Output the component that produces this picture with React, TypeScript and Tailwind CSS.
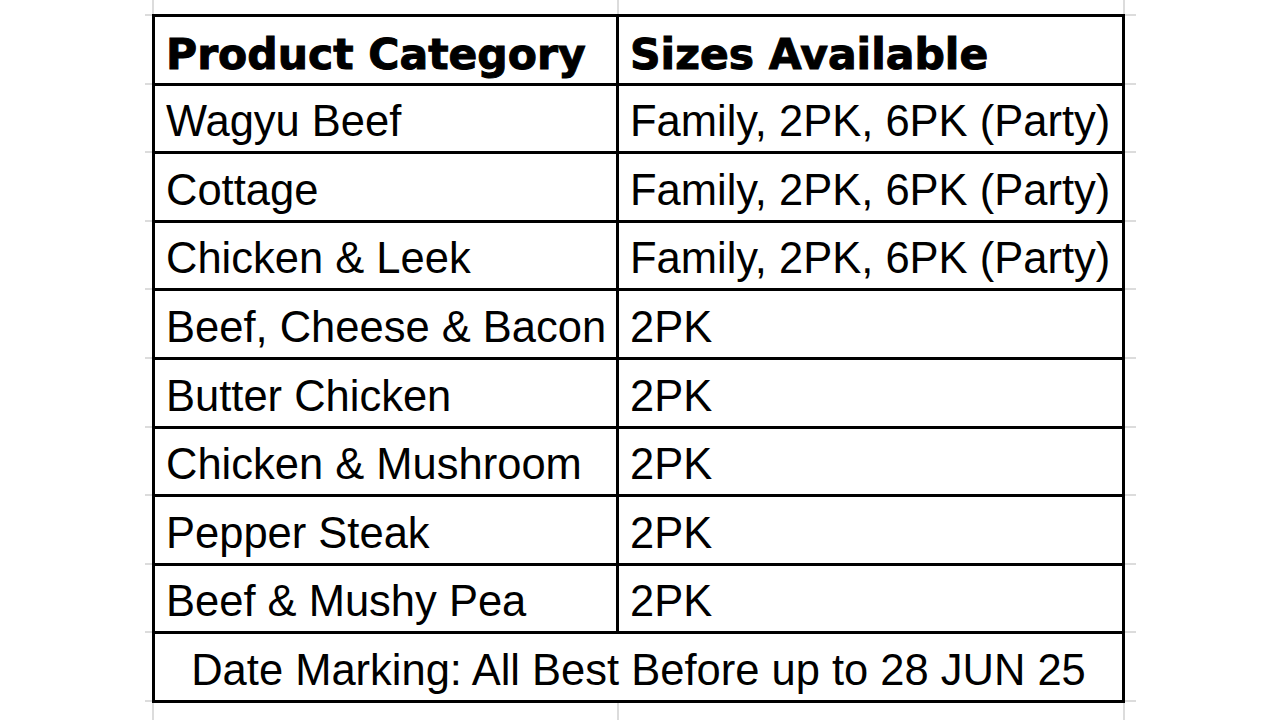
const rows = [
  { name: 'Wagyu Beef', sizes: 'Family, 2PK, 6PK (Party)' },
  { name: 'Cottage', sizes: 'Family, 2PK, 6PK (Party)' },
  { name: 'Chicken & Leek', sizes: 'Family, 2PK, 6PK (Party)' },
  { name: 'Beef, Cheese & Bacon', sizes: '2PK' },
  { name: 'Butter Chicken', sizes: '2PK' },
  { name: 'Chicken & Mushroom', sizes: '2PK' },
  { name: 'Pepper Steak', sizes: '2PK' },
  { name: 'Beef & Mushy Pea', sizes: '2PK' },
]

const slots = Array.from({ length: 10 }, (_, i) => i)

function Cell({ children, left, head }: { children: React.ReactNode; left?: boolean; head?: boolean }) {
  return (
    <div
      className={
        'flex items-center whitespace-nowrap pl-[11px] ' +
        (head ? 'pt-[10px] ' : 'pt-[7px] ') +
        (left ? 'border-r-[3px] border-black' : '')
      }
    >
      {children}
    </div>
  )
}

// faint sheet gridlines that show above and below the table
function ColumnStubs({ grow }: { grow?: boolean }) {
  return (
    <div className={'flex ' + (grow ? 'flex-1' : 'h-[14px]')}>
      <div className="w-[154px] border-r-2 border-[#dcdcdc]" />
      <div className="w-[465px] border-r-2 border-[#dcdcdc]" />
      <div className="w-[506px] border-r-2 border-[#dcdcdc]" />
    </div>
  )
}

// row gridlines poking out at the sides
function RowTicks({ side }: { side: 'left' | 'right' }) {
  const tick = side === 'left' ? 'w-[7px]' : 'w-[11px]'
  return (
    <div className={'flex flex-col ' + (side === 'left' ? 'w-[152px] items-end' : 'items-start')}>
      {slots.map((i) => (
        <div key={i} className="h-[68.6px]">
          <div className={tick + ' border-t-2 border-[#dcdcdc]'} />
        </div>
      ))}
      <div className={tick + ' border-t-2 border-[#dcdcdc]'} />
    </div>
  )
}

export default function App() {
  return (
    <div className="flex h-[720px] w-[1280px] flex-col overflow-hidden bg-white font-['Liberation_Sans',Arial,sans-serif] text-[43.5px] leading-none text-black">
      <ColumnStubs />
      <div className="flex">
        <RowTicks side="left" />
        <div className="w-[973px] border-[3px] border-b-0 border-black">
          <div className="grid h-[68.6px] grid-cols-[464px_1fr] border-b-[3px] border-black font-['DejaVu_Sans',sans-serif] text-[42.5px] font-bold [-webkit-text-stroke:1px_black]">
            <Cell left head>Product Category</Cell>
            <Cell head>Sizes Available</Cell>
          </div>
          {rows.map((r) => (
            <div key={r.name} className="grid h-[68.6px] grid-cols-[464px_1fr] border-b-[3px] border-black">
              <Cell left>{r.name}</Cell>
              <Cell>{r.sizes}</Cell>
            </div>
          ))}
          <div className="flex h-[68.6px] items-center justify-center border-b-[3px] border-black pt-[7px]">
            Date Marking: All Best Before up to 28 JUN 25
          </div>
        </div>
        <RowTicks side="right" />
      </div>
      <ColumnStubs grow />
    </div>
  )
}
